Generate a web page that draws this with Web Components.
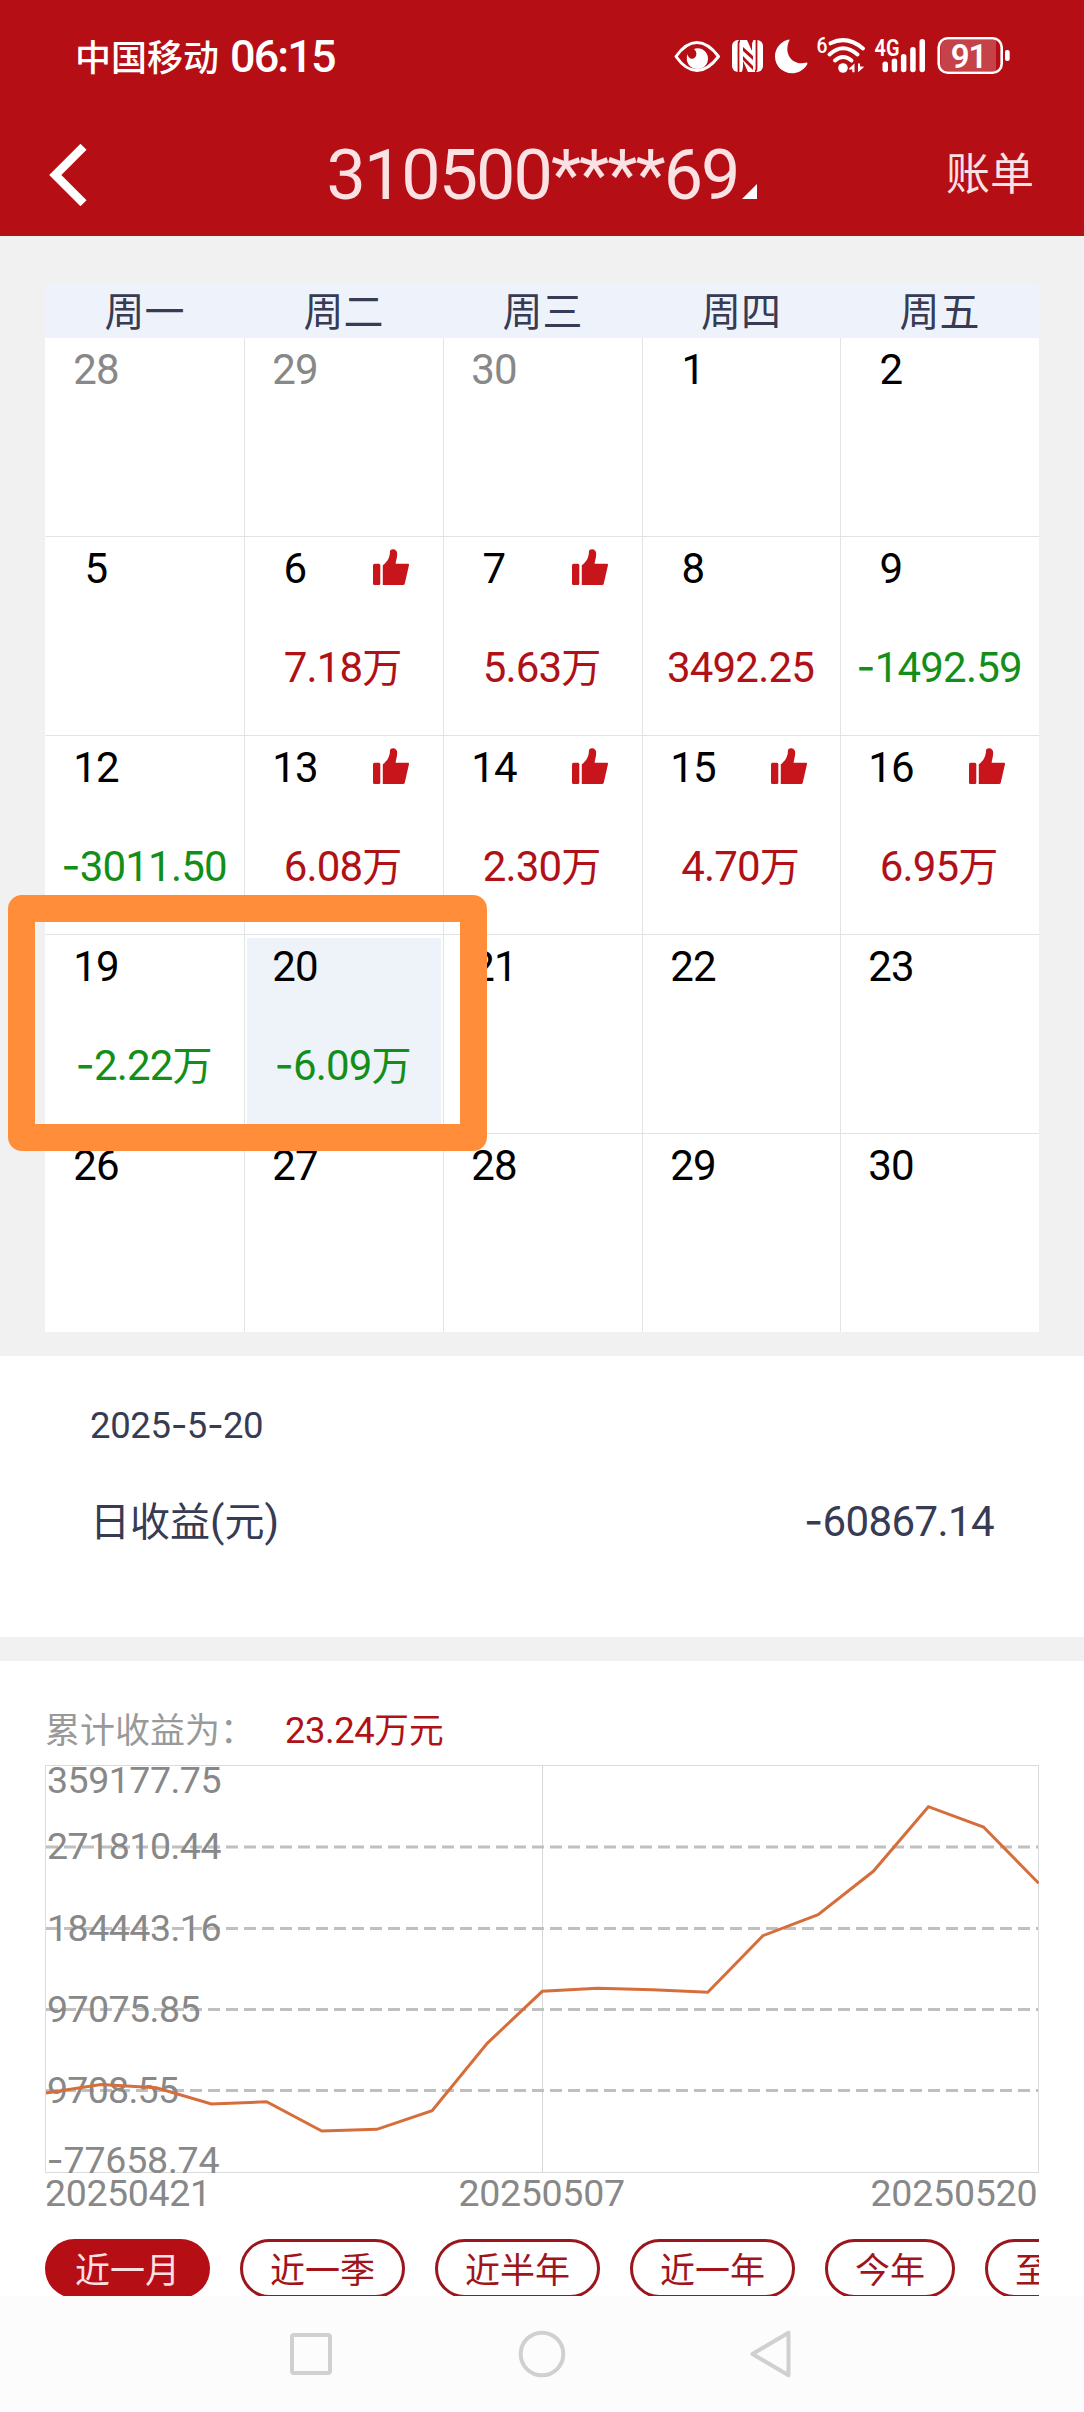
<!DOCTYPE html>
<html lang="zh-CN">
<head>
<meta charset="utf-8">
<title>日收益</title>
<style>
  body {
    margin: 0;
    background: #f1f1f1;
    --brand: #b50f15;
    --brand-text: #b01116;
    --down: #138f19;
    --ink: #373b54;
    --num: Roboto, "Noto Sans CJK SC", sans-serif;
    --cn: "Noto Sans CJK SC", sans-serif;
    font-family: var(--num);
  }
</style>
</head>
<body>
<phone-page></phone-page>

<script>
  // line-height 0 keeps the fallback faces from moving the baseline
  const MIXED = `
    .cn { font-family: var(--cn); font-size: .953em; line-height: 0; letter-spacing: 0; }
    .dash { font-family: Inter, sans-serif; line-height: 0; letter-spacing: -.02em; }
  `;

  // Digits, hanzi and the minus sign each get their own face
  const mixed = (text) => text
    .replace(/[\u4e00-\u9fff]+/g, '<span class="cn">$&</span>')
    .replace(/-(?=\d)/g, '<span class="dash">-</span>');

  class StatusBar extends HTMLElement {
    constructor() {
      super();
      this.attachShadow({mode: 'open'});
    }

    connectedCallback() {
      this.shadowRoot.innerHTML = `
        <style>
          :host {
            display: flex;
            align-items: center;
            height: 114px;
            padding: 0 69px 0 75px;
            color: #fff;
          }
          .carrier { font: 500 36px/50px var(--cn); margin-top: -5px; }
          .time {
            font: 500 45px/50px var(--num);
            letter-spacing: -1.9px;
            margin-left: 11px;
          }
          svg { margin-left: auto; display: block; }
        </style>
        <span class="carrier">中国移动</span>
        <span class="time">06:15</span>
        <svg width="345" height="50" viewBox="670 32 345 50" fill="#fff">
          <path d="M676 56.500C683 46.500 690 42.500 697 42.500S711 46.500 718.500 56.500C711 66.500 704 70.500 697 70.500S683 66.500 676 56.500Z" fill="none" stroke="#fff" stroke-width="3" stroke-linejoin="round"/>
          <path d="M687.500 54C688 58 691 59.500 693.500 58.500C697 57 697.500 52 694 49C701 46.500 708 51.500 708 58.500C708 65 703 69 697.500 69C691 69 684.500 63 687.500 54Z"/>
          <rect x="732" y="40" width="31" height="32" rx="6"/>
          <path d="M738.500 72V44Q738.500 41 740 41M756.500 40V68Q756.500 71 755 71.500" fill="none" stroke="#b50f15" stroke-width="1.800"/>
          <path d="M743 47L753 56V60L743 51ZM743 56L753 66V70L743 60Z" fill="#b50f15"/>
          <path d="M743 61L748 72H741.500Q743 70 743 66ZM752 51L747 40H753.500Q752 42 752 46Z" fill="#b50f15"/>
          <path d="M789.500 40.200C783 53 792 66.500 806.500 62.500C808 62.500 807.500 64 806.500 65.500C796 80 775 72.500 775 56.500C775 48.500 780 42.500 787 40C789 39.300 790 39.300 789.500 40.200Z"/>
          <text x="816.500" y="53" font-size="22" font-weight="500" textLength="11" lengthAdjust="spacingAndGlyphs">6</text>
          <g fill="none" stroke="#fff" stroke-width="4" stroke-linecap="round">
            <path d="M830.500 43.300Q847 35 863 48.500"/>
            <path d="M829.500 54.500Q843 42 857.500 54.500"/>
            <path d="M835 60.500Q843 53.500 851.500 60.500"/>
          </g>
          <circle cx="843" cy="68" r="4.800"/>
          <path d="M849 68.500L854.500 63.500V72.300H852.300V69.500H849ZM863.500 67.500L858 72.300V63.500H860V66.500H863.500Z"/>
          <text x="874.500" y="55.500" font-size="23" font-weight="600" textLength="25" lengthAdjust="spacingAndGlyphs">4G</text>
          <rect x="882.500" y="61.500" width="5.500" height="10.800" rx="2.700"/>
          <rect x="891.700" y="58.500" width="5.500" height="13.800" rx="2.700"/>
          <rect x="900.900" y="54" width="5.500" height="18.300" rx="2.700"/>
          <rect x="910.200" y="47" width="5.500" height="25.300" rx="2.700"/>
          <rect x="919.500" y="39" width="5.500" height="33.300" rx="2.700"/>
          <path d="M947 40H996V71H947Q940.500 71 940.500 64.500V46.500Q940.500 40 947 40Z" fill-opacity=".22"/>
          <rect x="938.700" y="38.200" width="63" height="34.500" rx="9" fill="none" stroke="#fff" stroke-width="2.600"/>
          <rect x="1005" y="50" width="4.700" height="11" rx="2"/>
          <text x="968.500" y="67.500" font-size="33" font-weight="600" text-anchor="middle" letter-spacing="-1">91</text>
        </svg>
      `;
    }
  }

  class TitleBar extends HTMLElement {
    constructor() {
      super();
      this.attachShadow({mode: 'open'});
    }

    connectedCallback() {
      this.shadowRoot.innerHTML = `
        <style>
          :host {
            display: grid;
            grid-template-columns: 140px 1fr 140px;
            align-items: center;
            height: 122px;
            color: #fae2e4;
          }
          .back { display: block; margin-left: 49px; }
          .account {
            display: flex;
            justify-content: center;
            align-items: baseline;
            font-size: 70px;
            line-height: 80px;
            letter-spacing: -1.95px;
          }
          .account svg { margin: 0 0 -2px 4px; }
          .action {
            justify-self: end;
            margin: -9px 50px 0 0;
            font: 400 44px/60px var(--cn);
          }
        </style>
        <svg class="back" width="38" height="62" viewBox="0 0 38 62">
          <path d="M34.500 2.800L6.300 31L34.500 59.200" fill="none" stroke="#fff" stroke-width="8.600"/>
        </svg>
        <span class="account"><slot></slot><svg width="15" height="15" viewBox="0 0 15 15"><path d="M15 0V15H0Z" fill="#fff"/></svg></span>
        <span class="action">${this.getAttribute('action')}</span>
      `;
    }
  }

  class DayCell extends HTMLElement {
    constructor() {
      super();
      this.attachShadow({mode: 'open'});
    }

    connectedCallback() {
      const amount = this.getAttribute('amount') || '';
      this.shadowRoot.innerHTML = `
        <style>
          :host {
            display: grid;
            grid-template: 64px 1fr / 100px 1fr;
            box-sizing: border-box;
            border-left: 1px solid var(--left, #e3e3e3);
            border-bottom: 1px solid var(--bottom, #e3e3e3);
            font-size: 42px;
            letter-spacing: -.8px;
            color: #000;
            background: #fff content-box;
          }
          :host([muted]) { color: #888; }
          :host([selected]) {
            background: linear-gradient(#eef2f9, #eef2f9) 2px 3px / calc(100% - 4px) calc(100% - 6px) no-repeat #fff;
          }
          .day { line-height: 64px; text-align: center; }
          svg { display: block; margin: 12px 0 0 28px; }
          .amount {
            grid-column: 1 / -1;
            grid-row: 2;
            padding-right: 2px;
            line-height: 133px;
            text-align: center;
            white-space: nowrap;
            color: ${amount.startsWith('-') ? 'var(--down)' : 'var(--brand-text)'};
          }
          ${MIXED}
        </style>
        <span class="day">${this.getAttribute('day')}</span>
        ${this.hasAttribute('liked') ? `
        <svg width="36" height="36" viewBox="0 0 36 36" fill="#c8151b">
          <rect y="14.700" width="7.300" height="21.300" rx="1.500"/>
          <path d="M9.800 36V16.200C14.500 13 16.800 8.500 17 2.500C17.200 -.8 24.200 -1 24.200 5C24.200 8.500 23 11.500 22.600 14.700H35Q36.200 14.700 36 16L31.800 34.500Q31.500 36 30 36Z"/>
        </svg>` : ''}
        <span class="amount">${mixed(amount)}</span>
      `;
    }
  }

  class ProfitCalendar extends HTMLElement {
    constructor() {
      super();
      this.attachShadow({mode: 'open'});
    }

    connectedCallback() {
      const weekdays = ['周一', '周二', '周三', '周四', '周五'];
      // [day, amount, flags]
      const days = [
        [28, '', 'muted'], [29, '', 'muted'], [30, '', 'muted'], [1], [2],
        [5], [6, '7.18万', 'liked'], [7, '5.63万', 'liked'], [8, '3492.25'], [9, '-1492.59'],
        [12, '-3011.50'], [13, '6.08万', 'liked'], [14, '2.30万', 'liked'], [15, '4.70万', 'liked'], [16, '6.95万', 'liked'],
        [19, '-2.22万'], [20, '-6.09万', 'selected'], [21], [22], [23],
        [26], [27], [28], [29], [30],
      ];

      this.shadowRoot.innerHTML = `
        <style>
          :host {
            display: block;
            position: relative;
            padding: 48px 45px 24px;
          }
          .week, .days {
            display: grid;
            grid-template-columns: 199px 199px 199px 198px 199px;
          }
          .week {
            height: 54px;
            background: #eef3fb;
            color: var(--ink);
            font: 400 40px/51px var(--cn);
            text-align: center;
          }
          .days { grid-template-rows: repeat(4, 199px) 198px; background: #fff; }
          day-cell:nth-child(5n + 1) { --left: transparent; }
          day-cell:nth-child(n + 21) { --bottom: transparent; }
          .marker {
            position: absolute;
            left: 8px;
            top: 659px;
            width: 425px;
            height: 202px;
            border: 27px solid #ff8d3a;
            border-radius: 14px;
          }
        </style>
        <div class="week">${weekdays.map((name) => `<span>${name}</span>`).join('')}</div>
        <div class="days">
          ${days.map(([day, amount = '', flag = '']) => `<day-cell day="${day}" amount="${amount}" ${flag}></day-cell>`).join('')}
        </div>
        <div class="marker"></div>
      `;
    }
  }

  class DayDetail extends HTMLElement {
    constructor() {
      super();
      this.attachShadow({mode: 'open'});
    }

    connectedCallback() {
      this.shadowRoot.innerHTML = `
        <style>
          :host {
            display: block;
            box-sizing: border-box;
            height: 281px;
            padding: 42px 90px 0;
            background: #fff;
            color: var(--ink);
          }
          .date { font-size: 36.5px; line-height: 56px; letter-spacing: -.35px; }
          .row {
            display: flex;
            justify-content: space-between;
            margin-top: 28px;
            font-size: 42px;
            line-height: 80px;
          }
          .value { letter-spacing: -.6px; }
          ${MIXED}
        </style>
        <div class="date">${mixed(this.getAttribute('date'))}</div>
        <div class="row">
          <span>${mixed(this.getAttribute('label'))}</span>
          <span class="value">${mixed(this.getAttribute('value'))}</span>
        </div>
      `;
    }
  }

  class ProfitChart extends HTMLElement {
    constructor() {
      super();
      this.attachShadow({mode: 'open'});
    }

    connectedCallback() {
      const points = [328, 319.5, 322.7, 339, 336.7, 366, 364.3, 345.7, 278.3, 226.3,
        223.3, 224.7, 227.3, 170.7, 149.7, 106.3, 41.7, 62, 118.3];
      const line = points.map((y, i) => `${(1 + i * 55.15).toFixed(1)},${y}`).join(' ');
      const grid = [82, 163.5, 244.5, 325.5];
      // [text, x, baseline, width]
      const labels = [
        ['359177.75', 2, 28, 174.5],
        ['271810.44', 2, 94, 174.5],
        ['184443.16', 2, 176, 174.5],
        ['97075.85', 2, 257, 153.5],
        ['9708.55', 2, 338, 132],
        ['-77658.74', 1.5, 408, 173],
        ['20250421', 0, 441, 166],
        ['20250507', 413.5, 441, 166.5],
        ['20250520', 825.5, 441, 167],
      ];

      this.shadowRoot.innerHTML = `
        <style>
          :host { display: block; }
          svg { display: block; }
          text { font-size: 37.5px; fill: #888; }
          .dash { font-family: Inter, sans-serif; }
        </style>
        <svg width="994" height="450" viewBox="0 0 994 450">
          <rect x=".5" y=".5" width="993" height="407" fill="none" stroke="#dcdcdc"/>
          <path d="M497.500 0V407" stroke="#d6d6d6"/>
          ${grid.map((y) => `<path d="M1 ${y}H993" stroke="#c0c0c0" stroke-width="2.800" stroke-dasharray="12 6"/>`).join('')}
          ${labels.map(([text, x, y, w]) => `<text x="${x}" y="${y}" textLength="${w}">${text.replace('-', '<tspan class="dash">-</tspan>')}</text>`).join('')}
          <polyline points="${line}" fill="none" stroke="#d66e3c" stroke-width="3"/>
        </svg>
      `;
    }
  }

  class PillButton extends HTMLElement {
    constructor() {
      super();
      this.attachShadow({mode: 'open'});
    }

    connectedCallback() {
      this.shadowRoot.innerHTML = `
        <style>
          :host {
            display: block;
            flex: none;
            box-sizing: border-box;
            height: 59px;
            padding: 0 27px;
            border: 3px solid #9a161c;
            border-radius: 30px;
            color: #a0141a;
            font: 400 35px/51px var(--cn);
            white-space: nowrap;
          }
          :host([active]) {
            background: var(--brand);
            border-color: var(--brand);
            color: #fbdfe2;
          }
        </style>
        <slot></slot>
      `;
    }
  }

  class ProfitTrend extends HTMLElement {
    constructor() {
      super();
      this.attachShadow({mode: 'open'});
    }

    connectedCallback() {
      this.shadowRoot.innerHTML = `
        <style>
          :host {
            display: block;
            box-sizing: border-box;
            height: 635px;
            margin-top: 24px;
            padding: 40px 45px 0;
            background: #fff;
            overflow: hidden;
          }
          .total {
            height: 64px;
            line-height: 60px;
            font-size: 36.5px;
            letter-spacing: -.5px;
            color: var(--brand-text);
          }
          .label {
            margin-right: 30px;
            font-family: var(--cn);
            font-size: 35px;
            line-height: 0;
            letter-spacing: 0;
            color: #999;
          }
          .ranges {
            display: flex;
            gap: 30px;
            margin-top: 24px;
            overflow: hidden;
          }
          ${MIXED}
        </style>
        <div class="total"><span class="label">累计收益为：</span>${mixed('23.24万元')}</div>
        <profit-chart></profit-chart>
        <div class="ranges">
          <pill-button active>近一月</pill-button>
          <pill-button>近一季</pill-button>
          <pill-button>近半年</pill-button>
          <pill-button>近一年</pill-button>
          <pill-button>今年</pill-button>
          <pill-button>至今</pill-button>
        </div>
      `;
    }
  }

  class NavBar extends HTMLElement {
    constructor() {
      super();
      this.attachShadow({mode: 'open'});
    }

    connectedCallback() {
      this.shadowRoot.innerHTML = `
        <style>
          :host {
            display: flex;
            justify-content: center;
            align-items: center;
            gap: 183px;
            height: 116px;
            background: #fcfcfc;
          }
          svg {
            display: block;
            fill: none;
            stroke: #d0d0d0;
            stroke-width: 4;
            stroke-linejoin: round;
          }
        </style>
        <svg width="48" height="48" viewBox="0 0 48 48"><rect x="5" y="5" width="38" height="38" rx="2"/></svg>
        <svg width="48" height="48" viewBox="0 0 48 48"><circle cx="24" cy="24" r="21.300"/></svg>
        <svg width="48" height="48" viewBox="0 0 48 48"><path d="M3.500 24L39.500 2.700V45.300Z"/></svg>
      `;
    }
  }

  class PhonePage extends HTMLElement {
    constructor() {
      super();
      this.attachShadow({mode: 'open'});
    }

    connectedCallback() {
      this.shadowRoot.innerHTML = `
        <style>
          :host { display: block; width: 1084px; height: 2412px; overflow: hidden; }
          header { background: var(--brand); }
        </style>
        <header>
          <status-bar></status-bar>
          <title-bar action="账单">310500****69</title-bar>
        </header>
        <profit-calendar></profit-calendar>
        <day-detail date="2025-5-20" label="日收益(元)" value="-60867.14"></day-detail>
        <profit-trend></profit-trend>
        <nav-bar></nav-bar>
      `;
    }
  }

  customElements.define('status-bar', StatusBar);
  customElements.define('title-bar', TitleBar);
  customElements.define('day-cell', DayCell);
  customElements.define('profit-calendar', ProfitCalendar);
  customElements.define('day-detail', DayDetail);
  customElements.define('profit-chart', ProfitChart);
  customElements.define('pill-button', PillButton);
  customElements.define('profit-trend', ProfitTrend);
  customElements.define('nav-bar', NavBar);
  customElements.define('phone-page', PhonePage);
</script>
</body>
</html>
